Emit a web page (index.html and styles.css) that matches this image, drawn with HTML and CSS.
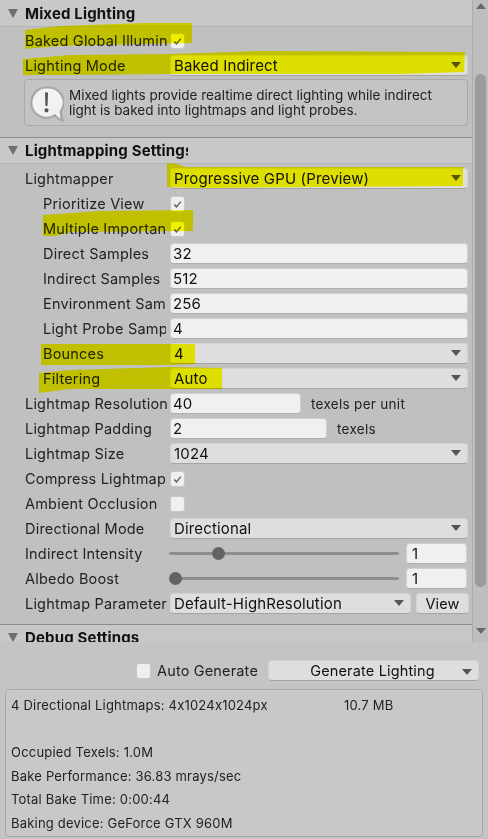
FILE: index.html
```html
<!DOCTYPE html>
<html lang="en">
<head>
<meta charset="utf-8">
<title>Lighting</title>
<link rel="stylesheet" href="styles.css">
</head>
<body>
<div class="window">
  <div class="inspector">
    <div class="content">
      <section class="section first">
        <header class="section-head"><svg class="fold" viewBox="0 0 10 9"><path d="M0 0h10L5 9z"/></svg><h2>Mixed Lighting</h2></header>
        <div class="section-body mixed">
          <div class="row"><span class="label">Baked Global Illumination</span><span class="check"><svg viewBox="0 0 16 16"><path d="M4 8.500l2.800 3L12 5"/></svg></span></div>
          <div class="row"><span class="label">Lighting Mode</span><div class="select"><span>Baked Indirect</span><i class="arrow"></i></div></div>
          <div class="help">
            <svg class="help-icon" viewBox="0 0 38 40"><path class="bubble" d="M19 1.500a16.500 16.500 0 1 0 9 30.300c2 2.500 5 4.700 8.500 5.700-1.500-3-2-6-2-10A16.500 16.500 0 0 0 19 1.500z"/><path class="mark" d="M17.300 7h3.400l-.6 14.500h-2.200zM19 24a2.300 2.300 0 1 1 0 4.600 2.300 2.300 0 0 1 0-4.600z"/></svg>
            <p>Mixed lights provide realtime direct lighting while indirect light is baked into lightmaps and light probes.</p>
          </div>
        </div>
      </section>
      <section class="section">
        <header class="section-head"><svg class="fold" viewBox="0 0 10 9"><path d="M0 0h10L5 9z"/></svg><h2 class="clip">Lightmapping Settings</h2></header>
        <div class="section-body">
          <div class="row"><span class="label">Lightmapper</span><div class="select"><span>Progressive GPU (Preview)</span><i class="arrow"></i></div></div>
          <div class="row sub"><span class="label">Prioritize View</span><span class="check"><svg viewBox="0 0 16 16"><path d="M4 8.500l2.800 3L12 5"/></svg></span></div>
          <div class="row sub"><span class="label">Multiple Importance Sampling</span><span class="check"><svg viewBox="0 0 16 16"><path d="M4 8.500l2.800 3L12 5"/></svg></span></div>
          <div class="row sub"><span class="label">Direct Samples</span><div class="input">32</div></div>
          <div class="row sub"><span class="label">Indirect Samples</span><div class="input">512</div></div>
          <div class="row sub"><span class="label">Environment Samples</span><div class="input">256</div></div>
          <div class="row sub"><span class="label">Light Probe Samples</span><div class="input">4</div></div>
          <div class="row sub"><span class="label">Bounces</span><div class="select"><span>4</span><i class="arrow"></i></div></div>
          <div class="row sub"><span class="label">Filtering</span><div class="select"><span>Auto</span><i class="arrow"></i></div></div>
          <div class="row"><span class="label">Lightmap Resolution</span><div class="input res">40</div><span class="unit">texels per unit</span></div>
          <div class="row"><span class="label">Lightmap Padding</span><div class="input pad">2</div><span class="unit">texels</span></div>
          <div class="row"><span class="label">Lightmap Size</span><div class="select"><span>1024</span><i class="arrow"></i></div></div>
          <div class="row"><span class="label">Compress Lightmaps</span><span class="check"><svg viewBox="0 0 16 16"><path d="M4 8.500l2.800 3L12 5"/></svg></span></div>
          <div class="row"><span class="label">Ambient Occlusion</span><span class="check"></span></div>
          <div class="row"><span class="label">Directional Mode</span><div class="select"><span>Directional</span><i class="arrow"></i></div></div>
          <div class="row"><span class="label">Indirect Intensity</span><div class="slider"><div class="track"><i class="thumb mid"></i></div><div class="input small">1</div></div></div>
          <div class="row"><span class="label">Albedo Boost</span><div class="slider"><div class="track"><i class="thumb"></i></div><div class="input small">1</div></div></div>
          <div class="row"><span class="label">Lightmap Parameters</span><div class="select"><span>Default-HighResolution</span><i class="arrow"></i></div><div class="btn view">View</div></div>
        </div>
      </section>
      <section class="section last">
        <header class="section-head"><svg class="fold" viewBox="0 0 10 9"><path d="M0 0h10L5 9z"/></svg><h2>Debug Settings</h2></header>
      </section>
    </div>
    <div class="scrollbar">
      <svg class="sb-arrow up" viewBox="0 0 10 6"><path d="M5 0l5 6H0z"/></svg>
      <div class="sb-lane"><div class="sb-thumb"></div></div>
      <svg class="sb-arrow down" viewBox="0 0 10 6"><path d="M0 0h10L5 6z"/></svg>
    </div>
  </div>
  <footer class="footer">
    <div class="actions">
      <span class="check"></span><span class="auto">Auto Generate</span>
      <div class="btn generate"><span>Generate Lighting</span><i class="arrow"></i></div>
    </div>
    <div class="info">
      <div class="info-line"><span class="info-main">4 Directional Lightmaps: 4x1024x1024px</span><span>10.7 MB</span></div>
      <div class="info-line"></div>
      <div class="info-line">Occupied Texels: 1.0M</div>
      <div class="info-line">Bake Performance: 36.83 mrays/sec</div>
      <div class="info-line">Total Bake Time: 0:00:44</div>
      <div class="info-line">Baking device: GeForce GTX 960M</div>
    </div>
  </footer>
  <svg class="marker" viewBox="0 0 488 839" aria-hidden="true">
    <path d="M25 30L60 26 145 23 192 23 192 43 140 44 60 46 25 49z"/>
    <path d="M23 59L70 55 170 54 262 51 465 52 464 72 400 74 170 74 70 75 23 75z"/>
    <path d="M167 163L177 164 185 167 463 167 463 186 200 188 167 187z"/>
    <path d="M43 215L100 211 193 210 193 231 70 232 55 236 43 236z"/>
    <path d="M41 344L195 344 195 364 170 365 41 365z"/>
    <path d="M39 373L70 370 170 367 222 368 222 389 70 389 39 393z"/>
  </svg>
</div>
</body>
</html>
```
FILE: styles.css
```css
* { box-sizing: border-box; }
html, body { margin: 0; padding: 0; }
body { background: #c2c2c2; font-family: Inter, "Liberation Sans", sans-serif; font-feature-settings: "calt" 0; color: #1c1c1c; font-size: 14.5px; letter-spacing: .16px; }
.window { position: relative; width: 488px; height: 839px; overflow: hidden; }

.inspector { display: flex; height: 642px; overflow: hidden; background: #c0c0c0; }
.content { width: 472px; flex: none; }

.section { border-top: 1px solid #8c8c8c; }
.section.first { border-top: 0; }
.section-head { display: flex; align-items: center; height: 26px; padding-left: 8px; background: #c8c8c8; border-bottom: 1px solid #b4b4b4; }
.section.first .section-head { height: 27px; }
.fold { width: 10px; height: 9px; flex: none; fill: #6f6f6f; }
.section-head h2 { margin: 0 0 0 7px; font-size: 15px; font-weight: 700; color: #111; white-space: nowrap; }
.section-head h2.clip { width: 163px; overflow: hidden; }
.section-body { padding: 2px 0 0; }
.section-body.mixed { padding-bottom: 11px; padding-top: 1px; }
.section:not(.first):not(.last) .section-body { padding-bottom: 8px; }

.row { display: flex; align-items: center; height: 25px; padding: 0 4px 0 25px; }
.row.sub { padding-left: 43px; }
.label { margin-right: 3px; white-space: nowrap; overflow: hidden; color: #222; letter-spacing: .2px; }
.row > .label { flex: none; width: 142px; }
.row.sub > .label { width: 123px; margin-right: 4px; }

.check { display: flex; width: 15px; height: 16px; flex: none; background: #efefef; border: 1px solid #c8c8c8; border-radius: 3px; }
.check svg { width: 100%; height: 100%; fill: none; stroke: #5f5f5f; stroke-width: 1.700; }

.select { display: flex; align-items: center; justify-content: space-between; flex: 1; height: 21px; padding: 0 6px 1px 3px; background: #dedede; border: 1px solid #d2d2d2; border-bottom-color: #a4a4a4; border-radius: 4px; color: #111; font-size: 15px; letter-spacing: .16px; }
.arrow { width: 0; height: 0; flex: none; border-left: 5px solid transparent; border-right: 5px solid transparent; border-top: 6px solid #555; }

.input { flex: 1; height: 21px; line-height: 19px; padding: 0 2px; background: #f0f0f0; border: 1px solid #d0d0d0; border-bottom-color: #aeaeae; border-radius: 4px; color: #111; font-size: 15px; }
.input.res { flex: none; width: 131px; }
.input.pad { flex: none; width: 157px; }
.input.small { flex: none; width: 61px; margin-right: 1px; padding-left: 5px; }
.unit { margin-left: 10px; color: #222; font-size: 13.5px; letter-spacing: .3px; }

.slider { display: flex; align-items: center; flex: 1; gap: 7px; margin-left: -1px; }
.track { position: relative; flex: 1; height: 3px; background: #8e8e8e; border-radius: 2px; }
.thumb { position: absolute; left: 0; top: -5px; width: 13px; height: 13px; border-radius: 50%; background: #636363; }
.thumb.mid { left: 43px; }

.btn { display: flex; align-items: center; height: 21px; background: #dedede; border: 1px solid #d2d2d2; border-bottom-color: #a4a4a4; border-radius: 4px; color: #111; }
.view { flex: none; width: 53px; margin-left: 5px; margin-right: -1px; justify-content: center; padding-bottom: 1px; }

.help { display: flex; align-items: center; height: 47px; margin: 1px 0 0 24px; width: 444px; padding-left: 4px; border: 1px solid #a9a9a9; border-radius: 4px; background: #c4c4c4; }
.help p { margin: 0 0 0 5px; font-size: 13.5px; line-height: 15px; color: #222; width: 380px; letter-spacing: 0; }
.help-icon { width: 35px; height: 37px; flex: none; margin-top: 3px; }
.bubble { fill: #f2f2f2; stroke: #a8a8a8; stroke-width: 2.500; }
.mark { fill: #555; }

.scrollbar { display: flex; flex-direction: column; flex: 1; align-items: center; background: #bebebe; border-left: 1px solid #adadad; }
.sb-arrow { width: 10px; height: 6px; flex: none; fill: #6a6a6a; }
.sb-arrow.up { margin: 3px 0 2px; }
.sb-arrow.down { margin: 1px 0 8px; }
.sb-lane { flex: 1; width: 100%; padding: 63px 3px 40px 2px; }
.sb-thumb { height: 100%; width: 11px; border-radius: 6px; background: #9c9c9c; }

.footer { height: 197px; padding: 18px 5px 2px; background: #c4c4c4; }
.actions { display: flex; align-items: center; justify-content: flex-end; height: 21px; padding-right: 4px; }
.auto { margin-left: 6px; color: #222; }
.generate { position: relative; justify-content: center; width: 211px; margin-left: 10px; padding-right: 2px; }
.generate .arrow { position: absolute; right: 6px; top: 8px; }
.info { height: 148px; margin-top: 8px; padding: 3px 5px; border: 1px solid #a8a8a8; border-radius: 4px; background: #c8c8c8; font-size: 13px; letter-spacing: .2px; color: #222; }
.info-line { display: flex; height: 23.600px; align-items: center; }
.info-main { width: 333px; }

.marker { position: absolute; left: 0; top: 0; width: 488px; height: 839px; fill: #ffff00; mix-blend-mode: multiply; pointer-events: none; }
```
